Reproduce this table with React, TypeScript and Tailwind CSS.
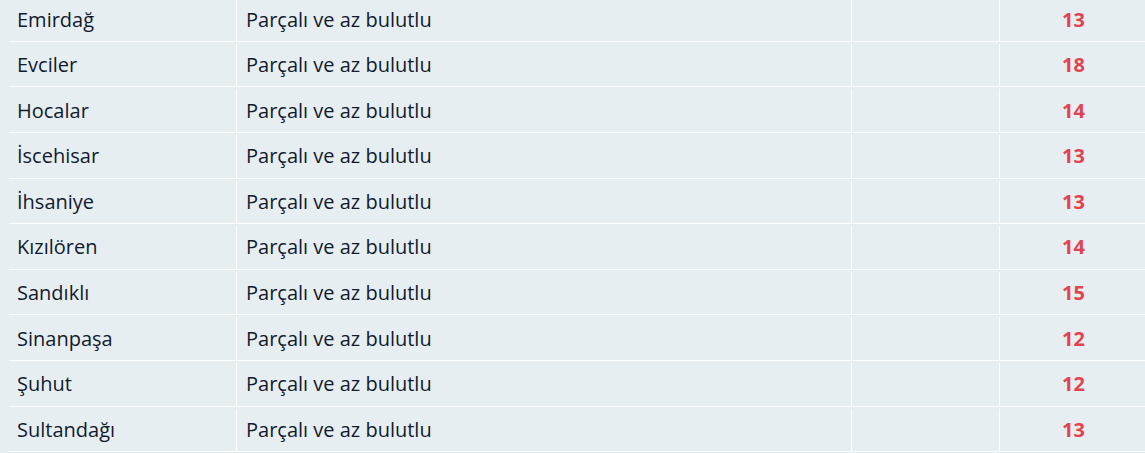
const rows = [
  { name: "Emirdağ", desc: "Parçalı ve az bulutlu", temp: 13 },
  { name: "Evciler", desc: "Parçalı ve az bulutlu", temp: 18 },
  { name: "Hocalar", desc: "Parçalı ve az bulutlu", temp: 14 },
  { name: "İscehisar", desc: "Parçalı ve az bulutlu", temp: 13 },
  { name: "İhsaniye", desc: "Parçalı ve az bulutlu", temp: 13 },
  { name: "Kızılören", desc: "Parçalı ve az bulutlu", temp: 14 },
  { name: "Sandıklı", desc: "Parçalı ve az bulutlu", temp: 15 },
  { name: "Sinanpaşa", desc: "Parçalı ve az bulutlu", temp: 12 },
  { name: "Şuhut", desc: "Parçalı ve az bulutlu", temp: 12 },
  { name: "Sultandağı", desc: "Parçalı ve az bulutlu", temp: 13 },
];

export default function App() {
  return (
    <div className="h-screen overflow-hidden bg-[#e7eef1] pl-[9px] font-['Open_Sans',sans-serif] text-[20px] text-[#121a2e]">
      {/* Weather table, scrolled slightly */}
      <div className="-mt-[3.8px]">
        {rows.map((r) => (
          <div
            key={r.name}
            className="grid h-[45.6px] grid-cols-[227px_615px_148px_1fr] border-b border-white pt-[2px]"
          >
            <div className="flex items-center pl-[8px]">{r.name}</div>
            <div className="flex items-center border-l border-white pl-[9px]">
              {r.desc}
            </div>
            <div className="border-l border-white" />
            <div className="flex items-center justify-center border-l border-white pl-[2px] font-bold text-[#e2434f]">
              {r.temp}
            </div>
          </div>
        ))}
      </div>
    </div>
  );
}
